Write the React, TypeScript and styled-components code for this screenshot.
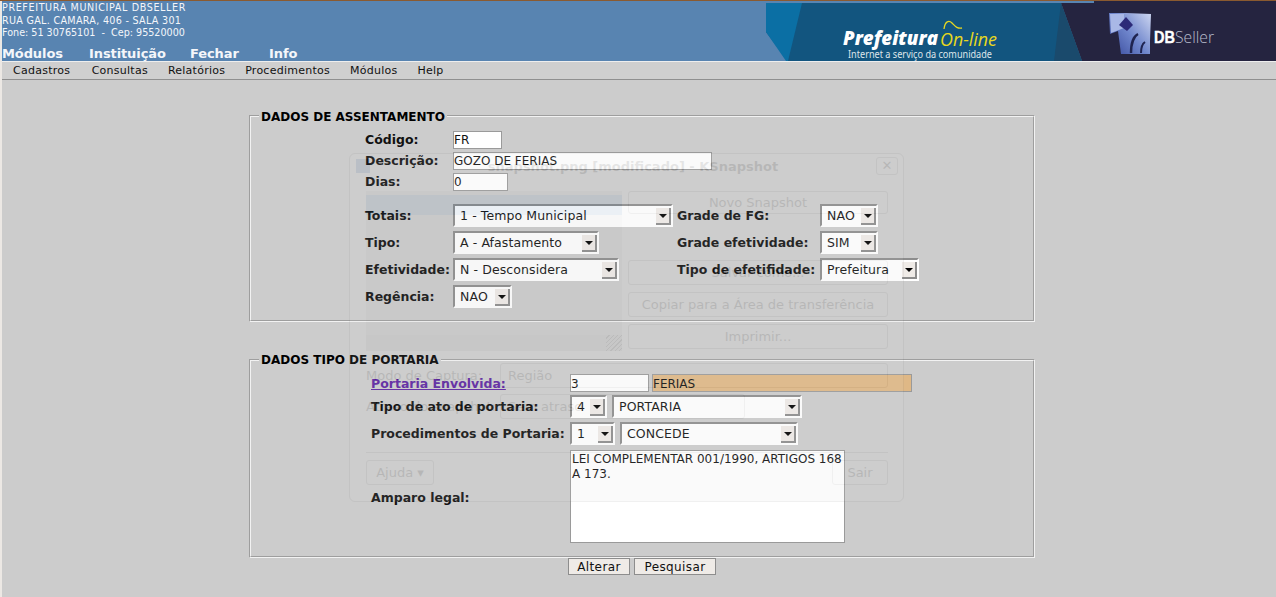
import React from 'react';
import styled, { createGlobalStyle } from 'styled-components';

const GlobalStyle = createGlobalStyle`
  html, body {
    margin: 0;
    padding: 0;
    height: 597px;
    overflow: hidden;
  }

  body {
    background-color: #ece8e4;
    font-family: "DejaVu Sans", sans-serif;
  }
`;

const Page = styled.div`
  position: relative;
  width: 1276px;
  height: 597px;
  overflow: hidden;
  border-top: 1px solid #8a5a30;
  box-sizing: border-box;
`;

const Header = styled.header`
  display: flex;
  justify-content: space-between;
  height: 60px;
  margin-left: 2px;
  background-color: #5884b1;
  color: #f4f6fa;
`;

const Banner = styled.svg`
  display: block;
  flex: none;
`;

const HeaderInfo = styled.div`
  display: flex;
  flex-direction: column;
  padding-top: 1px;
`;

const AddressLine = styled.div<{ $spacing?: number }>`
  font-size: 9.6px;
  line-height: 12.7px;
  letter-spacing: ${p => p.$spacing ?? 0}px;
  white-space: pre;
`;

const TopNav = styled.nav`
  display: grid;
  grid-template-columns: 87px 101px 79px auto;
  margin-top: 6px;
  font-size: 13px;
  font-weight: bold;
  letter-spacing: -0.1px;
  line-height: 15px;
`;

const MenuBar = styled.nav`
  display: flex;
  gap: 20px;
  height: 19px;
  margin-left: 2px;
  padding-left: 11px;
  background-color: #cfcfcf;
  border-top: 1px solid #eeeeee;
  border-bottom: 1px solid #8f8f8f;
  box-sizing: border-box;
  font-size: 11px;
  letter-spacing: 0.25px;
  line-height: 17px;
  color: #111;

  & > a:first-child {
    margin-right: 1.5px;
  }
`;

const Main = styled.main`
  display: flex;
  flex-direction: column;
  align-items: center;
  height: 517px;
  margin-left: 2px;
  padding: 27px 0 0 6px;
  background-color: #cccccc;
  box-sizing: border-box;
`;

const Group = styled.fieldset<{ $height: number; $gap?: number }>`
  width: 786px;
  height: ${p => p.$height}px;
  margin: 0 0 ${p => p.$gap ?? 0}px;
  padding: 0;
  border: 2px groove #f2f2f2;
  box-sizing: border-box;
  min-inline-size: 0;
`;

const GroupTitle = styled.legend<{ $top: number }>`
  margin-left: 8px;
  padding: ${p => p.$top}px 2px 0 2px;
  font-size: 12px;
  font-weight: bold;
  line-height: 15px;
  color: #000;
`;

const Rows = styled.div`
  display: flex;
  flex-direction: column;
  padding: 4px 0 0 114px;
`;

const TextRow = styled.div`
  display: grid;
  grid-template-columns: 88px auto;
  justify-content: start;
  align-items: center;
  height: 21px;
`;

const ChoiceGrid = styled.div`
  display: grid;
  grid-template-columns: 88px 224px 143px auto;
  grid-auto-rows: 27px;
  justify-content: start;
  align-items: center;
  margin-top: 10px;
`;

const Label = styled.label`
  font-size: 12.5px;
  font-weight: bold;
  line-height: 15px;
  color: #111;
  white-space: nowrap;
`;

const NotesLabel = styled(Label)`
  margin-top: 5px;
`;

const PortariaRows = styled.div`
  display: grid;
  grid-template-columns: 199px auto;
  grid-auto-rows: auto;
  justify-content: start;
  align-items: center;
  padding: 5px 0 0 120px;
`;

const LookupLink = styled.a`
  font-size: 12.5px;
  font-weight: bold;
  line-height: 15px;
  color: #5a22a0;
  text-decoration: underline;
`;

const Line = styled.div<{ $height: number }>`
  display: flex;
  align-items: center;
  height: ${p => p.$height}px;
`;

const TextInput = styled.input<{ $width: number; $tone?: string; $left?: number }>`
  width: ${p => p.$width}px;
  height: 18px;
  margin: 0 0 0 ${p => p.$left ?? 0}px;
  padding: 1px 0 0;
  border: 1px solid #9a9a9a;
  border-radius: 0;
  outline: none;
  background-color: ${p => p.$tone ?? '#fff'};
  box-sizing: border-box;
  font-family: "DejaVu Sans", sans-serif;
  font-size: 12px;
  color: #111;
`;

const Notes = styled.textarea`
  display: block;
  width: 275px;
  height: 93px;
  margin: 3px 0 0;
  padding: 1px;
  border: 1px solid #9a9a9a;
  border-radius: 0;
  outline: none;
  resize: none;
  overflow: hidden;
  background-color: #fff;
  box-sizing: border-box;
  font-family: "DejaVu Sans", sans-serif;
  font-size: 12px;
  line-height: 15px;
  color: #111;
`;

const SelectBox = styled.div<{ $width: number; $left?: number }>`
  display: flex;
  justify-content: space-between;
  align-items: center;
  width: ${p => p.$width}px;
  height: 23px;
  margin-left: ${p => p.$left ?? 0}px;
  padding: 0 0 0 5px;
  border-style: solid;
  border-width: 2px;
  border-color: #8d8d8d #fff #fff #8d8d8d;
  background-color: #fff;
  box-sizing: border-box;
  font-size: 12.5px;
  letter-spacing: 0.1px;
  color: #111;
`;

const SelectArrow = styled.span`
  position: relative;
  flex: none;
  width: 15px;
  height: 17px;
  margin-top: 1px;
  border-right: 2px solid #8d8d8d;
  border-bottom: 2px solid #8d8d8d;
  background-color: #efebe7;
  box-sizing: border-box;

  &::after {
    content: '';
    position: absolute;
    left: 3px;
    top: 6px;
    border-style: solid;
    border-width: 4px 4px 0;
    border-color: #000 transparent transparent;
  }
`;

const Actions = styled.div`
  display: flex;
  gap: 4px;
`;

const Button = styled.button<{ $width: number }>`
  width: ${p => p.$width}px;
  height: 17px;
  margin: 0;
  padding: 1px 0 0;
  border: 1px solid #8d8d8d;
  border-radius: 0;
  background-color: #efebe7;
  font-family: "DejaVu Sans", sans-serif;
  font-size: 12px;
  letter-spacing: 0.4px;
  line-height: 15px;
  color: #111;
`;

/* desktop effect: the KSnapshot window fading out on top of the page */
const GhostWindow = styled.div`
  position: absolute;
  left: 349px;
  top: 152px;
  width: 555px;
  height: 349px;
  padding: 2px 15px 0 16px;
  border: 1px solid #777;
  border-radius: 6px;
  background-color: #d6d6d6;
  box-sizing: border-box;
  font-size: 13px;
  color: #000;
  opacity: 0.1;
  pointer-events: none;
`;

const GhostTitle = styled.div`
  display: flex;
  justify-content: space-between;
  align-items: center;
  height: 20px;
  margin: 0 -10px 15px;
  font-weight: bold;
`;

const GhostTitleText = styled.span`
  flex: 1;
  padding-left: 20px;
  text-align: center;
`;

const GhostIcon = styled.span`
  width: 14px;
  height: 14px;
  background-color: #2a5a9a;
`;

const GhostClose = styled.span`
  width: 22px;
  height: 18px;
  border: 1px solid #777;
  border-radius: 3px;
  box-sizing: border-box;
  line-height: 15px;
  text-align: center;
`;

const GhostBody = styled.div`
  display: grid;
  grid-template-columns: 256px 260px;
  column-gap: 6px;
`;

const GhostShot = styled.div`
  display: flex;
  flex-direction: column;
  height: 160px;
  background-color: #b8b8b8;
`;

const GhostShotBar = styled.div`
  height: 20px;
  margin-top: 4px;
  background-color: #4a78a8;
`;

const GhostShotContent = styled.div`
  flex: 1;
`;

const GhostShotStatus = styled.div`
  display: flex;
  justify-content: flex-end;
  height: 16px;
  background-color: #a4a4a4;
`;

const GhostShotGrip = styled.span`
  width: 16px;
  height: 16px;
  background: repeating-linear-gradient(135deg, #a4a4a4 0 2px, #333 2px 3px);
`;

const GhostButtons = styled.div`
  display: flex;
  flex-direction: column;
  gap: 7px;
`;

const GhostButton = styled.div<{ $height?: number; $below?: number }>`
  height: ${p => p.$height ?? 25}px;
  margin-bottom: ${p => p.$below ?? 0}px;
  border: 1px solid #777;
  border-radius: 3px;
  box-sizing: border-box;
  line-height: ${p => (p.$height ?? 25) - 2}px;
  text-align: center;
  white-space: nowrap;
`;

const GhostFields = styled.div`
  display: flex;
  flex-direction: column;
  gap: 6px;
  margin-top: 12px;
`;

const GhostField = styled.div`
  display: grid;
  grid-template-columns: 134px 1fr;
  align-items: center;
`;

const GhostInput = styled.div<{ $width?: number }>`
  width: ${p => (p.$width ? `${p.$width}px` : 'auto')};
  height: 25px;
  padding-left: 7px;
  border: 1px solid #777;
  border-radius: 3px;
  box-sizing: border-box;
  line-height: 23px;
`;

const GhostRule = styled.div`
  margin-top: 33px;
  border-top: 1px solid #777;
`;

const GhostFooter = styled.div`
  display: flex;
  justify-content: space-between;
  margin-top: 7px;
`;

const GhostFooterButton = styled(GhostButton)<{ $width: number }>`
  width: ${p => p.$width}px;
`;

const BannerArt = () => (
  <Banner width={510} height={60} viewBox="0 0 510 60" aria-label="Prefeitura On-line / DBSeller">
    <defs>
      <linearGradient id="dbMark" x1="0" y1="0.9" x2="1" y2="0.1">
        <stop offset="0" stopColor="#3a4c9e" />
        <stop offset="0.5" stopColor="#6f86cc" />
        <stop offset="1" stopColor="#c6d0ee" />
      </linearGradient>
    </defs>
    <polygon points="0,2 295,2 316,60 22,60 0,31" fill="#12557f" />
    <polygon points="0,2 36,2 22,60 20,60 0,31" fill="#0b6fa4" />
    <polygon points="295,2 510,2 510,60 316,60" fill="#252440" />
    <polygon points="295,2 316,60 288,60" fill="#1a4a6c" />
    <rect x="328" y="0" width="182" height="2" fill="#252440" />
    <text x="77" y="44" fill="#fff" fontFamily="Open Sans, sans-serif" fontStyle="italic" fontWeight="800" fontSize="19" textLength="95" lengthAdjust="spacingAndGlyphs">Prefeitura</text>
    <text x="174" y="45" fill="#e8d820" fontFamily="Open Sans, sans-serif" fontStyle="italic" fontWeight="400" fontSize="19" textLength="57" lengthAdjust="spacingAndGlyphs">On-line</text>
    <path d="M178 28c1-8 5-9 8-6 3 3 5 6 10 5" fill="none" stroke="#e8d820" strokeWidth="1.3" />
    <text x="82" y="57" fill="#dfe6ea" fontFamily="Noto Sans, sans-serif" fontSize="10" textLength="144" lengthAdjust="spacingAndGlyphs">Internet a serviço da comunidade</text>
    <path d="M343 12l17 0 25 1-1 27 0 13-29 0-3-23-8 3z" fill="url(#dbMark)" />
    <path d="M344 13l14 0 0 14-13 5z" fill="#a9b8e6" />
    <path d="M353 24l7-8 7 8-6 6z" fill="#2c2a78" />
    <path d="M365 52c0-10 3-17 7-19" fill="none" stroke="#1f2450" strokeWidth="2.4" />
    <path d="M375 52c0-5 1-9 4-11" fill="none" stroke="#1f2450" strokeWidth="2" />
    <text x="388" y="42" fill="#fff" fontFamily="Liberation Sans, sans-serif" fontWeight="bold" fontSize="17" stroke="#fff" strokeWidth="0.4" textLength="21" lengthAdjust="spacingAndGlyphs">DB</text>
    <text x="409" y="42" fill="#b9bdcc" fontFamily="Open Sans, sans-serif" fontWeight="300" fontSize="17" textLength="39" lengthAdjust="spacingAndGlyphs">Seller</text>
  </Banner>
);

const Select = ({ value, width, left }: { value: string; width: number; left?: number }) => (
  <SelectBox $width={width} $left={left}>
    <span>{value}</span>
    <SelectArrow />
  </SelectBox>
);

const App = () => {
  return (
    <Page>
      <GlobalStyle />
      <Header>
        <HeaderInfo>
          <AddressLine $spacing={0.62}>PREFEITURA MUNICIPAL DBSELLER</AddressLine>
          <AddressLine $spacing={0.3}>RUA GAL. CAMARA, 406 - SALA 301</AddressLine>
          <AddressLine>{'Fone: 51 30765101  -  Cep: 95520000'}</AddressLine>
          <TopNav>
            <a>Módulos</a>
            <a>Instituição</a>
            <a>Fechar</a>
            <a>Info</a>
          </TopNav>
        </HeaderInfo>
        <BannerArt />
      </Header>
      <MenuBar>
        <a>Cadastros</a>
        <a>Consultas</a>
        <a>Relatórios</a>
        <a>Procedimentos</a>
        <a>Módulos</a>
        <a>Help</a>
      </MenuBar>
      <Main>
        <Group $height={215} $gap={29}>
          <GroupTitle $top={3}>DADOS DE ASSENTAMENTO</GroupTitle>
          <Rows>
            <TextRow>
              <Label>Código:</Label>
              <TextInput $width={49} defaultValue="FR" readOnly />
            </TextRow>
            <TextRow>
              <Label>Descrição:</Label>
              <TextInput $width={259} defaultValue="GOZO DE FERIAS" readOnly />
            </TextRow>
            <TextRow>
              <Label>Dias:</Label>
              <TextInput $width={55} defaultValue="0" readOnly />
            </TextRow>
            <ChoiceGrid>
              <Label>Totais:</Label>
              <Select value="1 - Tempo Municipal" width={220} />
              <Label>Grade de FG:</Label>
              <Select value="NAO" width={58} />
              <Label>Tipo:</Label>
              <Select value="A - Afastamento" width={146} />
              <Label>Grade efetividade:</Label>
              <Select value="SIM" width={58} />
              <Label>Efetividade:</Label>
              <Select value="N - Desconsidera" width={166} />
              <Label>Tipo de efetifidade:</Label>
              <Select value="Prefeitura" width={99} />
              <Label>Regência:</Label>
              <Select value="NAO" width={59} />
            </ChoiceGrid>
          </Rows>
        </Group>
        <Group $height={207}>
          <GroupTitle $top={2}>DADOS TIPO DE PORTARIA</GroupTitle>
          <PortariaRows>
            <LookupLink href="#">Portaria Envolvida:</LookupLink>
            <Line $height={20}>
              <TextInput $width={79} defaultValue="3" readOnly />
              <TextInput $width={260} $tone="#dfb886" $left={3} defaultValue="FERIAS" readOnly />
            </Line>
            <Label>Tipo de ato de portaria:</Label>
            <Line $height={27}>
              <Select value="4" width={37} />
              <Select value="PORTARIA" width={190} left={5} />
            </Line>
            <Label>Procedimentos de Portaria:</Label>
            <Line $height={27}>
              <Select value="1" width={45} />
              <Select value="CONCEDE" width={178} left={5} />
            </Line>
            <NotesLabel>Amparo legal:</NotesLabel>
            <Notes defaultValue={'LEI COMPLEMENTAR 001/1990, ARTIGOS 168 A 173.'} readOnly />
          </PortariaRows>
        </Group>
        <Actions>
          <Button $width={62}>Alterar</Button>
          <Button $width={82}>Pesquisar</Button>
        </Actions>
      </Main>
      <GhostWindow aria-hidden>
        <GhostTitle>
          <GhostIcon />
          <GhostTitleText>snapshot.png [modificado] - KSnapshot</GhostTitleText>
          <GhostClose>✕</GhostClose>
        </GhostTitle>
        <GhostBody>
          <GhostShot>
            <GhostShotBar />
            <GhostShotContent />
            <GhostShotStatus>
              <GhostShotGrip />
            </GhostShotStatus>
          </GhostShot>
          <GhostButtons>
            <GhostButton $height={23} $below={39}>Novo Snapshot</GhostButton>
            <GhostButton>Salvar como...</GhostButton>
            <GhostButton>Copiar para a Área de transferência</GhostButton>
            <GhostButton>Imprimir...</GhostButton>
          </GhostButtons>
        </GhostBody>
        <GhostFields>
          <GhostField>
            <span>Modo de Captura:</span>
            <GhostInput>Região</GhostInput>
          </GhostField>
          <GhostField>
            <span>Atraso do snapshot:</span>
            <GhostInput $width={245}>Sem atraso</GhostInput>
          </GhostField>
        </GhostFields>
        <GhostRule />
        <GhostFooter>
          <GhostFooterButton $width={68}>Ajuda ▾</GhostFooterButton>
          <GhostFooterButton $width={56}>Sair</GhostFooterButton>
        </GhostFooter>
      </GhostWindow>
    </Page>
  );
};

export default App;
